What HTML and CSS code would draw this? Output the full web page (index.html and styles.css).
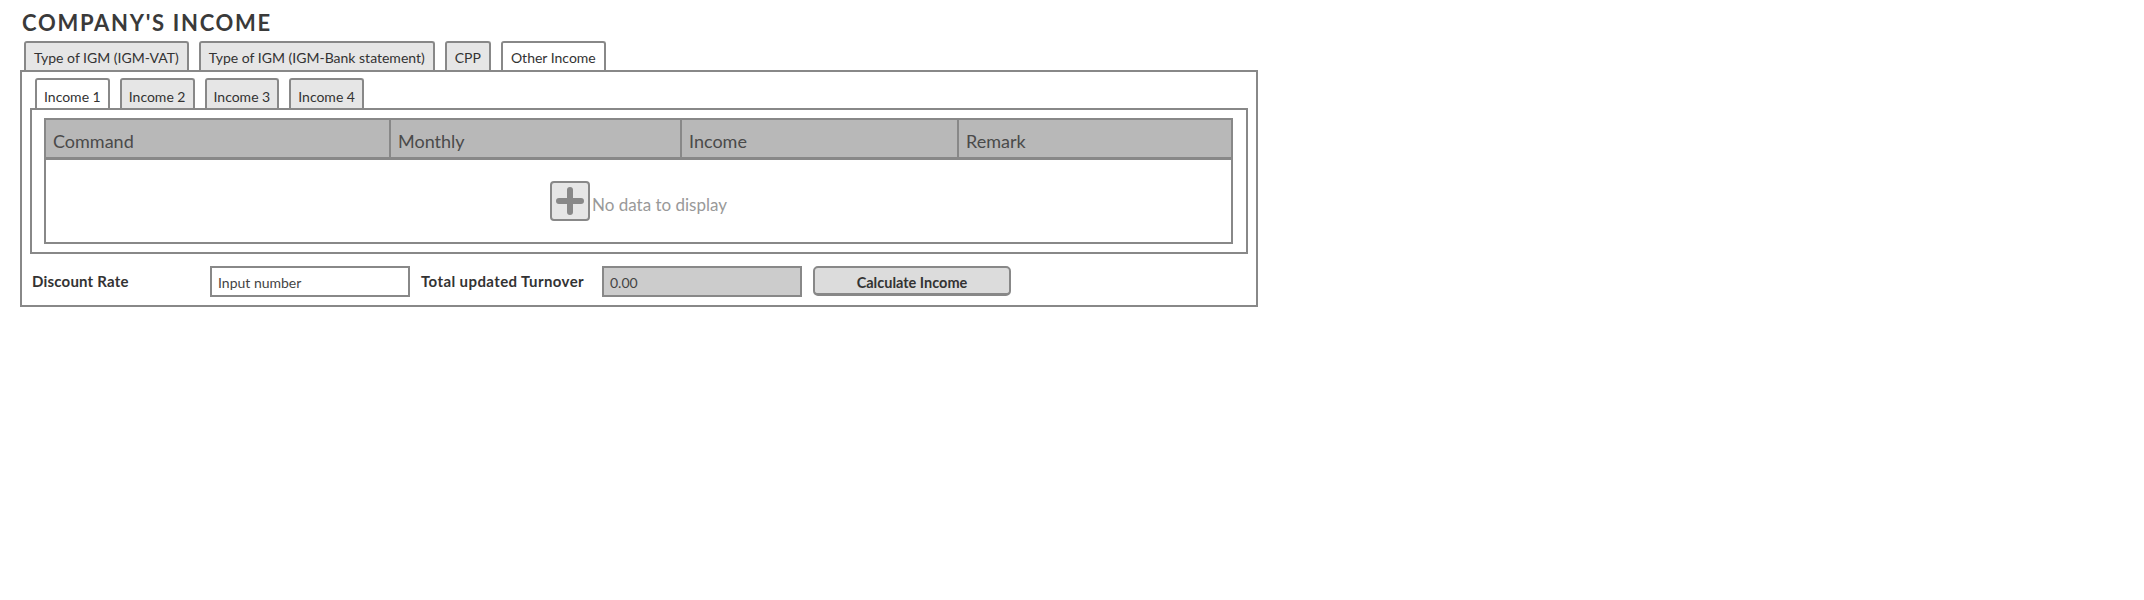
FILE: index.html
```html
<!DOCTYPE html>
<html lang="en">
<head>
<meta charset="utf-8">
<title>Company's Income</title>
<link rel="stylesheet" href="styles.css">
</head>
<body>
<div class="page">
  <h1 class="title">COMPANY'S INCOME</h1>
  <div class="tabs outer-tabs">
    <div class="tab">Type of IGM (IGM-VAT)</div>
    <div class="tab">Type of IGM (IGM-Bank statement)</div>
    <div class="tab">CPP</div>
    <div class="tab active">Other Income</div>
  </div>
  <div class="panel outer-panel">
    <div class="tabs inner-tabs">
      <div class="tab inner active">Income 1</div>
      <div class="tab inner">Income 2</div>
      <div class="tab inner">Income 3</div>
      <div class="tab inner">Income 4</div>
    </div>
    <div class="panel inner-panel">
      <div class="grid">
        <div class="grid-head">
          <div class="th">Command</div>
          <div class="th">Monthly</div>
          <div class="th">Income</div>
          <div class="th">Remark</div>
        </div>
        <div class="grid-body">
          <div class="empty">
            <span class="add-btn">
              <svg width="36" height="36" viewBox="0 0 36 36"><path d="M7 18H29M18 7V29" stroke="#888" stroke-width="6" stroke-linecap="round" fill="none"/></svg>
            </span>
            <span class="empty-text">No data to display</span>
          </div>
        </div>
      </div>
    </div>
    <div class="form-row">
      <label class="lbl lbl-first">Discount Rate</label>
      <div class="field">Input number</div>
      <label class="lbl lbl-second">Total updated Turnover</label>
      <div class="field readonly">0.00</div>
      <button class="btn">Calculate Income</button>
    </div>
  </div>
</div>
</body>
</html>
```
FILE: styles.css
```css
html, body {
  margin: 0;
  padding: 0;
  background: #fff;
}
body {
  font-family: Lato, "Open Sans", sans-serif;
  color: #333;
}
.page {
  padding: 10px 0 0 20px;
}
.title {
  margin: 0 0 5px 2px;
  font-size: 22px;
  line-height: 26px;
  font-weight: 700;
  letter-spacing: 1.7px;
  color: #3a3a3a;
}
.tabs {
  display: flex;
  gap: 10px;
}
.outer-tabs {
  margin-left: 4px;
}
.tab {
  border: 2px solid #888;
  border-bottom: none;
  border-radius: 3px 3px 0 0;
  background: #e6e6e6;
  padding: 6px 8px 4px;
  font-size: 14px;
  line-height: 17px;
  color: #333;
}
.tab.inner {
  padding: 8px 7px 3px;
}
.tab.active {
  background: #fff;
}
.panel {
  border: 2px solid #888;
  background: #fff;
}
.outer-panel {
  width: 1238px;
  box-sizing: border-box;
  padding: 6px 8px 8px;
}
.inner-tabs {
  margin-left: 5px;
}
.inner-panel {
  padding: 8px 13px 8px 12px;
}
.grid {
  border: 2px solid #888;
}
.grid-head {
  display: grid;
  grid-template-columns: 343px 291px 277px 1fr;
  background: #b8b8b8;
  border-bottom: 3px solid #888;
}
.th {
  padding: 5px 7px 0;
  line-height: 32px;
  font-size: 18px;
  color: #4a4a4a;
}
.th + .th {
  border-left: 2px solid #888;
}
.grid-body {
  height: 82px;
  display: flex;
  align-items: center;
  justify-content: center;
}
.empty {
  display: flex;
  align-items: flex-end;
  gap: 2px;
}
.add-btn {
  display: flex;
  width: 40px;
  height: 40px;
  box-sizing: border-box;
  border: 2px solid #888;
  border-radius: 4px;
  background: #e6e6e6;
}
.empty-text {
  font-size: 17px;
  line-height: 20px;
  color: #999;
  margin-bottom: 6px;
}
.form-row {
  display: flex;
  align-items: center;
  height: 32px;
  margin-top: 11px;
}
.lbl {
  font-size: 15px;
  font-weight: 700;
  letter-spacing: 0.2px;
  color: #333;
  box-sizing: border-box;
}
.lbl-first {
  width: 180px;
  padding-left: 2px;
}
.lbl-second {
  width: 192px;
  padding-left: 11px;
  letter-spacing: 0.4px;
}
.field {
  width: 200px;
  height: 31px;
  box-sizing: border-box;
  border: 2px solid #888;
  padding: 2px 6px 0;
  font-size: 14px;
  line-height: 25px;
  color: #444;
  background: #fff;
}
.field.readonly {
  background: #ccc;
}
.btn {
  margin-left: 11px;
  width: 198px;
  height: 30px;
  box-sizing: border-box;
  border: 2px solid #888;
  border-bottom-width: 3px;
  border-radius: 5px;
  background: #dcdcdc;
  font-family: Lato, "Open Sans", sans-serif;
  font-size: 14.5px;
  font-weight: 700;
  color: #333;
  padding: 3px 0 0;
}
```
